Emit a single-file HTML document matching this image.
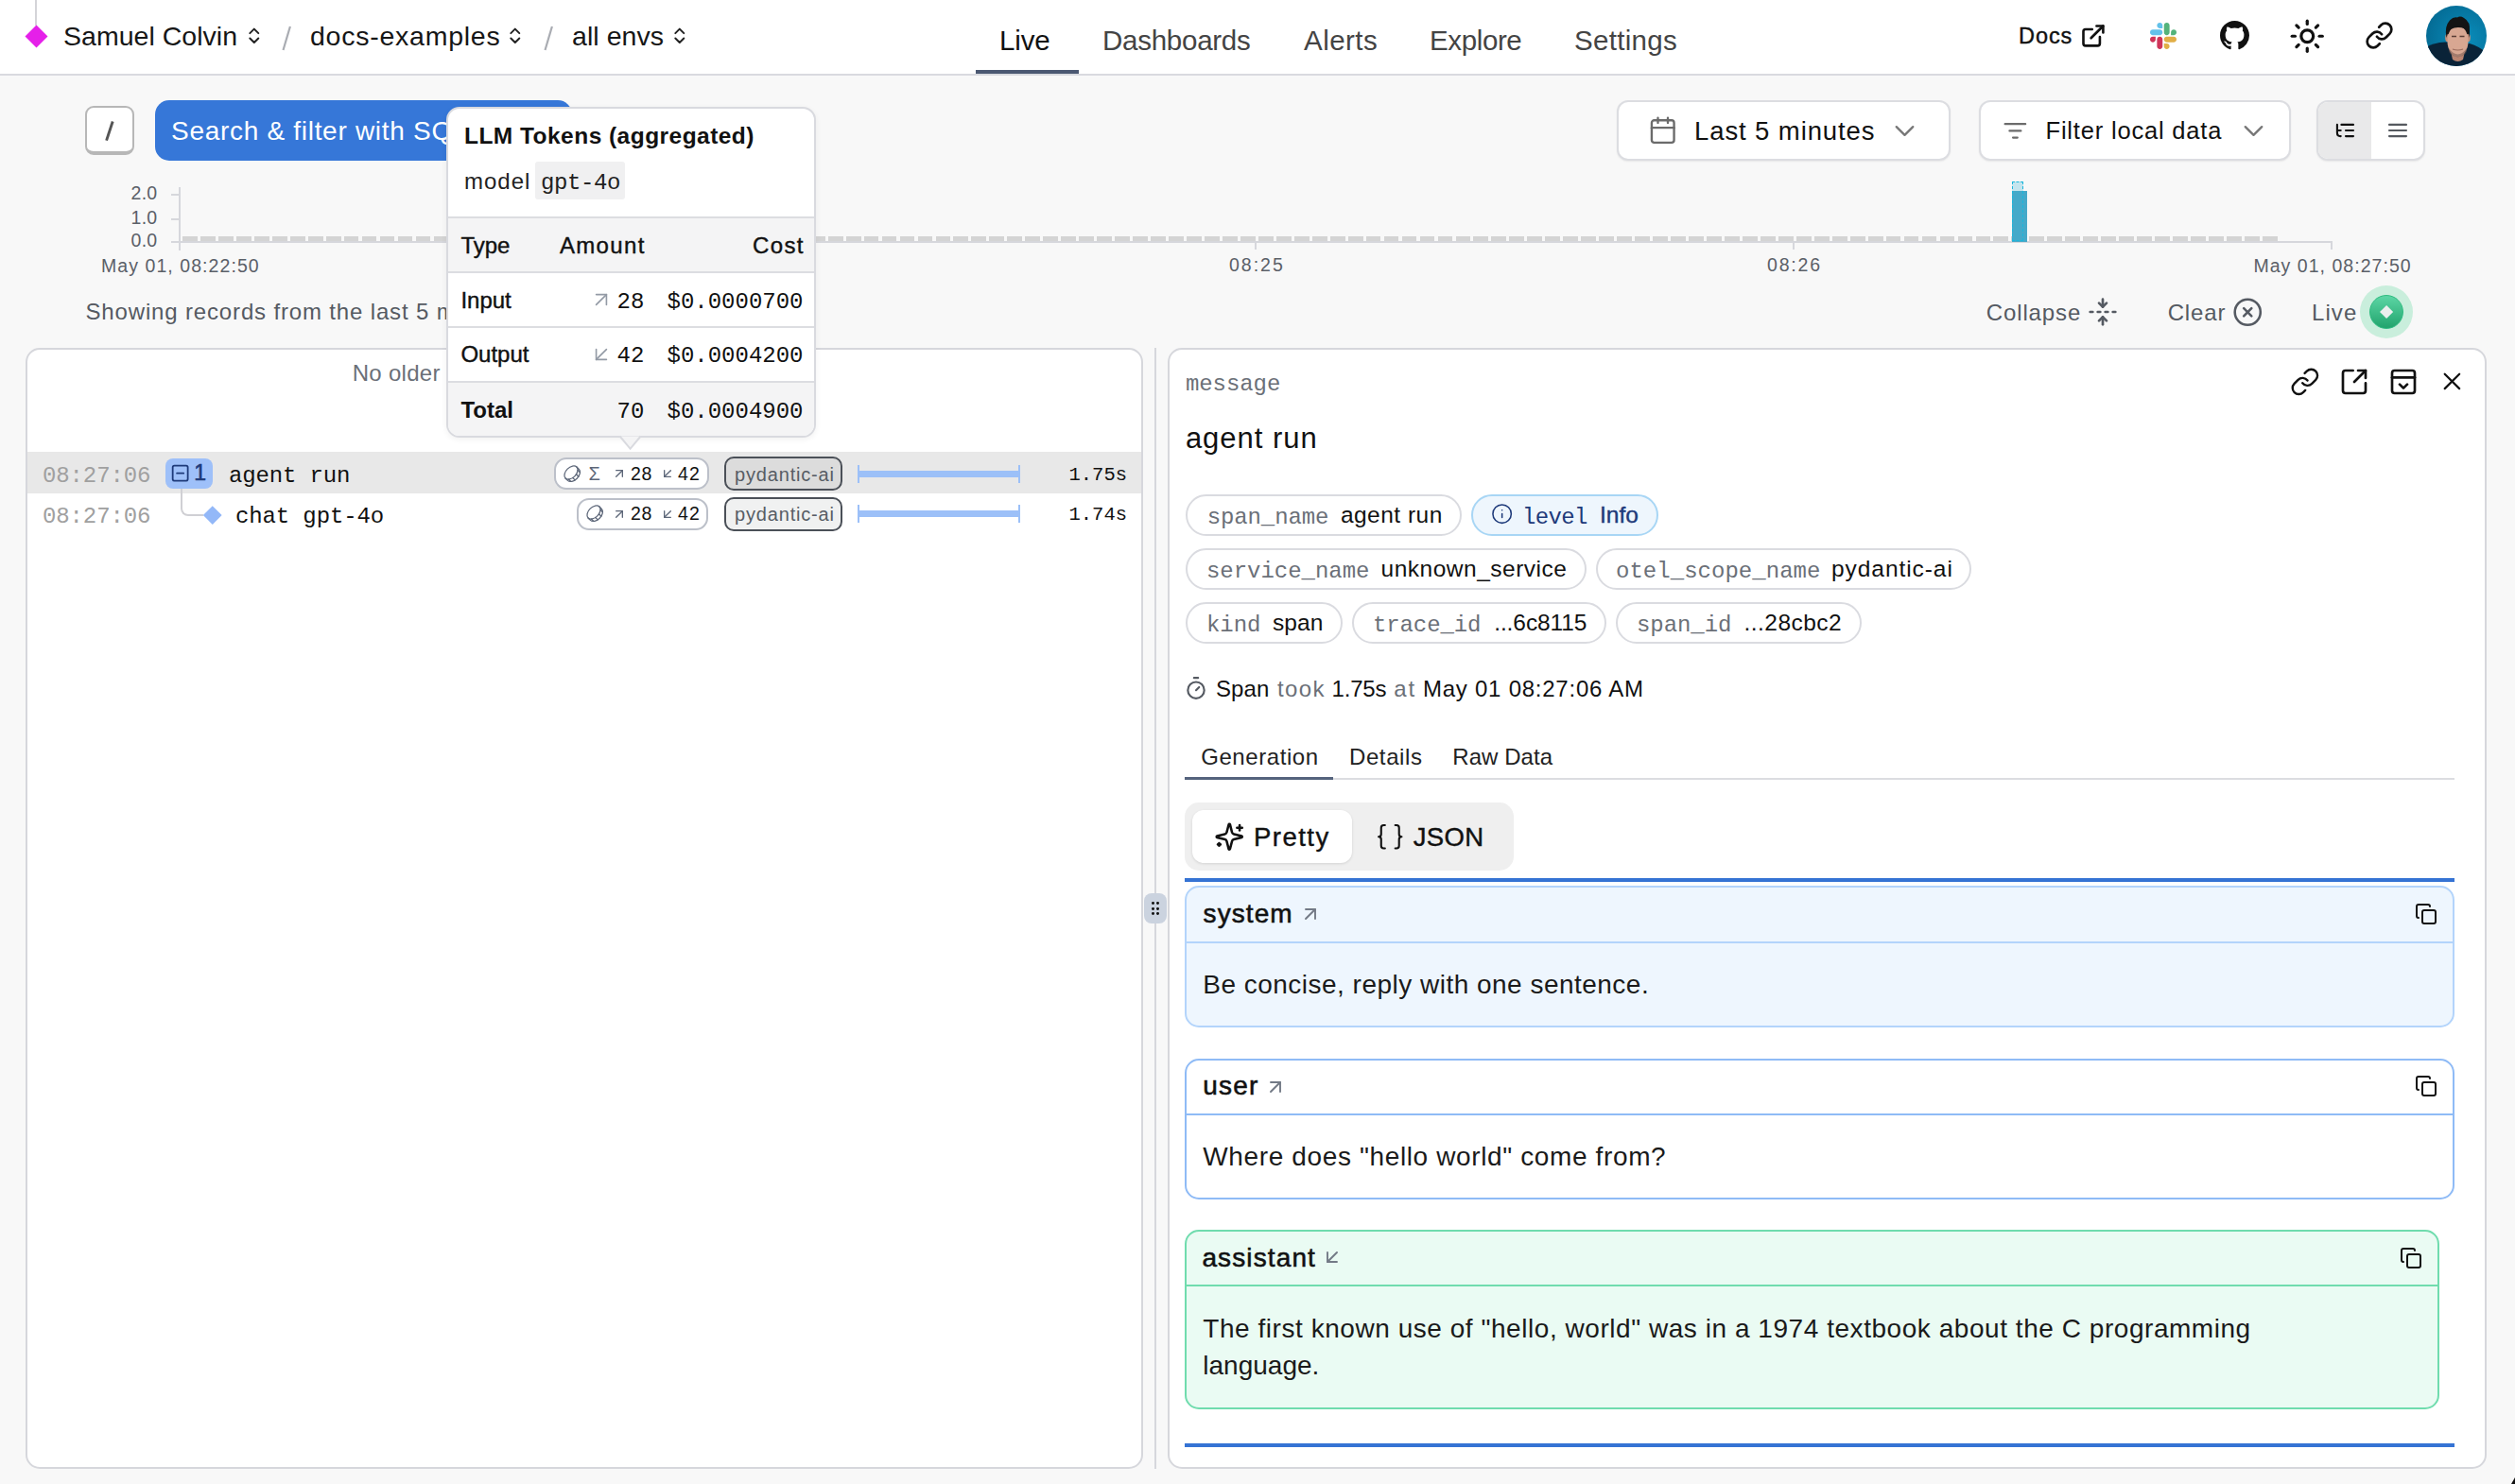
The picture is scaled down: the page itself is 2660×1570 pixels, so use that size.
<!DOCTYPE html><html><head><meta charset="utf-8"><style>html,body{margin:0;padding:0;width:2660px;height:1570px;overflow:hidden;background:#f8f8f8;position:relative}</style></head><body>
<div style="position:absolute;left:0px;top:0px;width:2660px;height:78px;background:#fff"></div>
<div style="position:absolute;left:0px;top:78px;width:2660px;height:2px;background:#d9dadf"></div>
<div style="position:absolute;left:37px;top:0px;width:2px;height:27px;background:#d4d4d8"></div>
<div style="position:absolute;left:29.5px;top:29.5px;width:17px;height:17px;background:#e520e9;transform:rotate(45deg)"></div>
<div id="t0" style="position:absolute;left:67px;top:24.07px;font:400 28.5px/1 'Liberation Sans', sans-serif;color:#161616;white-space:nowrap;letter-spacing:0.022px;">Samuel Colvin</div>
<svg style="position:absolute;left:257.7px;top:27.4px" width="21.6" height="21.6" viewBox="0 0 24 24" fill="none" stroke="#222" stroke-width="2.2" stroke-linecap="round" stroke-linejoin="round" ><path d="m7 15 5 5 5-5"/><path d="m7 9 5-5 5 5"/></svg>
<svg style="position:absolute;left:290px;top:20px" width="30" height="40"><path d="M16.9 8 L9.5 33" stroke="#a9acb2" stroke-width="2.2"/></svg>
<div id="t1" style="position:absolute;left:328px;top:24.07px;font:400 28.5px/1 'Liberation Sans', sans-serif;color:#161616;white-space:nowrap;letter-spacing:0.753px;">docs-examples</div>
<svg style="position:absolute;left:533.7px;top:27.4px" width="21.6" height="21.6" viewBox="0 0 24 24" fill="none" stroke="#222" stroke-width="2.2" stroke-linecap="round" stroke-linejoin="round" ><path d="m7 15 5 5 5-5"/><path d="m7 9 5-5 5 5"/></svg>
<svg style="position:absolute;left:566.5px;top:20px" width="30" height="40"><path d="M16.9 8 L9.5 33" stroke="#a9acb2" stroke-width="2.2"/></svg>
<div id="t2" style="position:absolute;left:605px;top:24.07px;font:400 28.5px/1 'Liberation Sans', sans-serif;color:#161616;white-space:nowrap;letter-spacing:0.067px;">all envs</div>
<svg style="position:absolute;left:707.7px;top:27.4px" width="21.6" height="21.6" viewBox="0 0 24 24" fill="none" stroke="#222" stroke-width="2.2" stroke-linecap="round" stroke-linejoin="round" ><path d="m7 15 5 5 5-5"/><path d="m7 9 5-5 5 5"/></svg>
<div id="t3" style="position:absolute;left:1057px;top:27.93px;font:400 29.5px/1 'Liberation Sans', sans-serif;color:#111;white-space:nowrap;letter-spacing:-0.118px;">Live</div>
<div id="t4" style="position:absolute;left:1166px;top:27.93px;font:400 29.5px/1 'Liberation Sans', sans-serif;color:#444;white-space:nowrap;letter-spacing:-0.256px;">Dashboards</div>
<div id="t5" style="position:absolute;left:1379px;top:27.93px;font:400 29.5px/1 'Liberation Sans', sans-serif;color:#444;white-space:nowrap;letter-spacing:0.470px;">Alerts</div>
<div id="t6" style="position:absolute;left:1512px;top:27.93px;font:400 29.5px/1 'Liberation Sans', sans-serif;color:#444;white-space:nowrap;letter-spacing:-0.377px;">Explore</div>
<div id="t7" style="position:absolute;left:1665px;top:27.93px;font:400 29.5px/1 'Liberation Sans', sans-serif;color:#444;white-space:nowrap;letter-spacing:0.311px;">Settings</div>
<div style="position:absolute;left:1032px;top:74px;width:109px;height:4px;background:#4b5872"></div>
<div id="t8" style="position:absolute;left:2135px;top:26.73px;font:400 23.5px/1 'Liberation Sans', sans-serif;color:#111;white-space:nowrap;letter-spacing:0.921px;-webkit-text-stroke:0.4px currentColor">Docs</div>
<svg style="position:absolute;left:2200.1px;top:24.1px" width="27.9" height="27.9" viewBox="0 0 24 24" fill="none" stroke="#111" stroke-width="2.25" stroke-linecap="round" stroke-linejoin="round" ><path d="M15 3h6v6"/><path d="M10 14 21 3"/><path d="M18 13v6a2 2 0 0 1-2 2H5a2 2 0 0 1-2-2V8a2 2 0 0 1 2-2h6"/></svg>
<svg style="position:absolute;left:2274px;top:24px" width="28" height="28" viewBox="0 0 122.8 122.8"><path d="M25.8 77.6c0 7.1-5.8 12.9-12.9 12.9S0 84.7 0 77.6s5.8-12.9 12.9-12.9h12.9v12.9zm6.5 0c0-7.1 5.8-12.9 12.9-12.9s12.9 5.8 12.9 12.9v32.3c0 7.1-5.8 12.9-12.9 12.9s-12.9-5.8-12.9-12.9V77.6z" fill="#cf3559"/><path d="M45.2 25.8c-7.1 0-12.9-5.8-12.9-12.9S38.1 0 45.2 0s12.9 5.8 12.9 12.9v12.9H45.2zm0 6.5c7.1 0 12.9 5.8 12.9 12.9s-5.8 12.9-12.9 12.9H12.9C5.8 58.1 0 52.3 0 45.2s5.8-12.9 12.9-12.9h32.3z" fill="#62c1ea"/><path d="M97 45.2c0-7.1 5.8-12.9 12.9-12.9s12.9 5.8 12.9 12.9-5.8 12.9-12.9 12.9H97V45.2zm-6.5 0c0 7.1-5.8 12.9-12.9 12.9s-12.9-5.8-12.9-12.9V12.9C64.7 5.8 70.5 0 77.6 0s12.9 5.8 12.9 12.9v32.3z" fill="#53b37b"/><path d="M77.6 97c7.1 0 12.9 5.8 12.9 12.9s-5.8 12.9-12.9 12.9-12.9-5.8-12.9-12.9V97h12.9zm0-6.5c-7.1 0-12.9-5.8-12.9-12.9s5.8-12.9 12.9-12.9h32.3c7.1 0 12.9 5.8 12.9 12.9s-5.8 12.9-12.9 12.9H77.6z" fill="#e1ae46"/></svg>
<svg style="position:absolute;left:2348px;top:22px" width="31" height="31" viewBox="0 0 16 16"><path fill="#111" d="M8 0C3.58 0 0 3.58 0 8c0 3.54 2.29 6.53 5.47 7.59.4.07.55-.17.55-.38 0-.19-.01-.82-.01-1.49-2.01.37-2.53-.49-2.69-.94-.09-.23-.48-.94-.82-1.13-.28-.15-.68-.52-.01-.53.63-.01 1.08.58 1.23.82.72 1.21 1.870.87 2.33.66.07-.52.28-.87.51-1.07-1.78-.2-3.64-.89-3.640-3.95 0-.87.31-1.59.82-2.15-.08-.2-.36-1.02.08-2.12 0 0 .67-.21 2.2.82.64-.18 1.32-.27 2-.27.68 0 1.36.09 2 .27 1.53-1.04 2.2-.82 2.2-.82.44 1.1.16 1.92.08 2.12.51.56.82 1.27.82 2.15 0 3.07-1.87 3.75-3.65 3.95.29.25.54.73.54 1.48 0 1.07-.01 1.93-.01 2.2 0 .21.15.46.55.38A8.013 8.013 0 0016 8c0-4.42-3.58-8-8-8z"/></svg>
<svg style="position:absolute;left:2420.6px;top:18.6px" width="38.5" height="38.5" viewBox="0 0 24 24" fill="none" stroke="#111" stroke-width="2" stroke-linecap="round" stroke-linejoin="round" ><circle cx="12" cy="12" r="4"/><path d="M12 2v2"/><path d="M12 20v2"/><path d="m4.93 4.93 1.41 1.41"/><path d="m17.66 17.66 1.41 1.41"/><path d="M2 12h2"/><path d="M20 12h2"/><path d="m6.34 17.66-1.41 1.41"/><path d="m19.07 4.93-1.41 1.41"/></svg>
<svg style="position:absolute;left:2500.7px;top:22.35px" width="31" height="31" viewBox="0 0 24 24" fill="none" stroke="#111" stroke-width="2.1" stroke-linecap="round" stroke-linejoin="round" ><path d="M10 13a5 5 0 0 0 7.54.54l3-3a5 5 0 0 0-7.07-7.07l-1.72 1.71"/><path d="M14 11a5 5 0 0 0-7.54-.54l-3 3a5 5 0 0 0 7.07 7.07l1.71-1.71"/></svg>
<svg style="position:absolute;left:2566px;top:6px" width="64" height="64" viewBox="0 0 64 64"><defs><clipPath id="avc"><circle cx="32" cy="32" r="32"/></clipPath><radialGradient id="avg" cx="0.65" cy="0.55" r="0.7"><stop offset="0" stop-color="#0a8dbb"/><stop offset="1" stop-color="#046a93"/></radialGradient></defs><g clip-path="url(#avc)"><rect width="64" height="64" fill="url(#avg)"/><path d="M0 44 Q8 39 20 38.5 L46 40 Q56 43 64 50 L64 64 L0 64Z" fill="#0a2338"/><path d="M26 48 L41 48 L39 57 Q33.5 61 28 57Z" fill="#b98471"/><ellipse cx="33.5" cy="29" rx="12.3" ry="15" fill="#141414"/><ellipse cx="22.5" cy="34" rx="2.3" ry="4.2" fill="#c4907c"/><ellipse cx="44.5" cy="34" rx="2.3" ry="4.2" fill="#c4907c"/><ellipse cx="33.5" cy="37.5" rx="11" ry="16.5" fill="#d8a792"/><path d="M24 45 Q33.5 58 43 45 Q44 53 33.5 54.5 Q23 53 24 45Z" fill="#6e5249" opacity="0.5"/><path d="M28 46 Q33.5 48 39 46" stroke="#9a6a5c" stroke-width="1.2" fill="none"/><path d="M27 32.5h5M35.5 32.5h5" stroke="#5a3d35" stroke-width="1.4"/><path d="M21.5 34 Q19 22 25 15.5 Q29 11.5 33 12.5 Q36 10.5 40 13 Q47 17 46 27 L45.5 34 Q44.5 27 41 24.5 Q33 21.5 26 25 Q23 28 21.5 34Z" fill="#141414"/></g></svg>
<div style="position:absolute;left:0px;top:80px;width:2660px;height:1490px;background:#f8f8f8"></div>
<div style="position:absolute;left:90px;top:112px;width:51.5px;height:51.5px;box-sizing:border-box;background:#fff;border:2px solid #b7b7b7;border-bottom-width:4px;border-radius:9px"></div>
<svg style="position:absolute;left:100px;top:120px" width="30" height="36"><path d="M19.2 8.5 L12.6 28.6" stroke="#555" stroke-width="2.9" stroke-linecap="butt"/></svg>
<div style="position:absolute;left:164px;top:106px;width:441px;height:64px;background:#3677d8;border-radius:15px"></div>
<div id="t9" style="position:absolute;left:181px;top:124.50px;font:400 28px/1 'Liberation Sans', sans-serif;color:#fff;white-space:nowrap;letter-spacing:0.705px;">Search &amp; filter with SQL</div>
<div style="position:absolute;left:1709.5px;top:106px;width:353px;height:64px;box-sizing:border-box;background:#fff;border:2px solid #dcdde1;border-radius:12px;box-shadow:0 1px 2px rgba(0,0,0,0.07)"></div>
<svg style="position:absolute;left:1743.2px;top:122.4px" width="31.5" height="31.5" viewBox="0 0 24 24" fill="none" stroke="#6b6b6b" stroke-width="1.8" stroke-linecap="round" stroke-linejoin="round" ><rect width="18" height="18" x="3" y="4" rx="2"/><path d="M16 2v4"/><path d="M8 2v4"/><path d="M3 10h18"/></svg>
<div id="t10" style="position:absolute;left:1792px;top:124.62px;font:400 27.5px/1 'Liberation Sans', sans-serif;color:#111;white-space:nowrap;letter-spacing:0.899px;">Last 5 minutes</div>
<svg style="position:absolute;left:1997px;top:120.7px" width="35" height="35" viewBox="0 0 24 24" fill="none" stroke="#777" stroke-width="1.6" stroke-linecap="round" stroke-linejoin="round" ><path d="m6 9 6 6 6-6"/></svg>
<div style="position:absolute;left:2093px;top:106px;width:330px;height:64px;box-sizing:border-box;background:#fff;border:2px solid #dcdde1;border-radius:12px;box-shadow:0 1px 2px rgba(0,0,0,0.07)"></div>
<svg style="position:absolute;left:2117.35px;top:124.1px" width="28.8" height="28.8" viewBox="0 0 24 24" fill="none" stroke="#6b6b6b" stroke-width="1.8" stroke-linecap="round" stroke-linejoin="round" ><path d="M3 6h18"/><path d="M7 12h10"/><path d="M10 18h4"/></svg>
<div id="t11" style="position:absolute;left:2163.5px;top:126.13px;font:400 25.5px/1 'Liberation Sans', sans-serif;color:#111;white-space:nowrap;letter-spacing:0.813px;">Filter local data</div>
<svg style="position:absolute;left:2365.6px;top:120.7px" width="35" height="35" viewBox="0 0 24 24" fill="none" stroke="#777" stroke-width="1.6" stroke-linecap="round" stroke-linejoin="round" ><path d="m6 9 6 6 6-6"/></svg>
<div style="position:absolute;left:2450px;top:106px;width:114.5px;height:64px;box-sizing:border-box;background:#fff;border:2px solid #dcdde1;border-radius:12px;box-shadow:0 1px 2px rgba(0,0,0,0.07)"></div>
<div style="position:absolute;left:2452px;top:108px;width:55.6px;height:60px;background:#e9e9ea;border-radius:10px 0 0 10px"></div>
<svg style="position:absolute;left:2460px;top:120px" width="40" height="40" viewBox="0 0 40 40" fill="none" stroke="#111" stroke-width="2.1" stroke-linecap="round" stroke-linejoin="round" ><path d="M16.4 11.9H29M21 18H29M21 24.1H29M11.9 11.9V20.5Q11.9 24.1 15.5 24.1H15.7M11.9 18H15.7"/></svg>
<svg style="position:absolute;left:2520px;top:120px" width="40" height="40" viewBox="0 0 40 40" fill="none" stroke="#55595f" stroke-width="2.1" stroke-linecap="round" stroke-linejoin="round" ><path d="M7 11.9H25M7 18H25M7 24.1H25"/></svg>
<div id="t12" style="position:absolute;left:138.6px;top:195.23px;font:400 19.5px/1 'Liberation Sans', sans-serif;color:#5b6068;white-space:nowrap;letter-spacing:0.230px;">2.0</div>
<div id="t13" style="position:absolute;left:138.6px;top:221.12px;font:400 19.5px/1 'Liberation Sans', sans-serif;color:#5b6068;white-space:nowrap;letter-spacing:0.230px;">1.0</div>
<div id="t14" style="position:absolute;left:138.6px;top:245.23px;font:400 19.5px/1 'Liberation Sans', sans-serif;color:#5b6068;white-space:nowrap;letter-spacing:0.230px;">0.0</div>
<div style="position:absolute;left:189px;top:198px;width:2px;height:67px;background:#d6d7dc"></div>
<div style="position:absolute;left:181px;top:205px;width:9px;height:2px;background:#d6d7dc"></div>
<div style="position:absolute;left:181px;top:231px;width:9px;height:2px;background:#d6d7dc"></div>
<div style="position:absolute;left:181px;top:255px;width:9px;height:2px;background:#d6d7dc"></div>
<div style="position:absolute;left:190px;top:255px;width:2277px;height:2px;background:#d6d7dc"></div>
<div style="position:absolute;left:193.4px;top:250.3px;width:2215.8px;height:5px;background:repeating-linear-gradient(90deg,#d4d4d4 0 15.8px,transparent 15.8px 18.965px)"></div>
<div style="position:absolute;left:1326.7px;top:257px;width:2px;height:7px;background:#d6d7dc"></div>
<div style="position:absolute;left:1895.6px;top:257px;width:2px;height:7px;background:#d6d7dc"></div>
<div style="position:absolute;left:2465px;top:257px;width:2px;height:7px;background:#d6d7dc"></div>
<div id="t15" style="position:absolute;left:107px;top:272.23px;font:400 19.5px/1 'Liberation Sans', sans-serif;color:#5b6068;white-space:nowrap;letter-spacing:1.065px;">May 01, 08:22:50</div>
<div id="t16" style="position:absolute;left:1300px;top:271.43px;font:400 19.5px/1 'Liberation Sans', sans-serif;color:#5b6068;white-space:nowrap;letter-spacing:1.989px;">08:25</div>
<div id="t17" style="position:absolute;left:1869px;top:271.43px;font:400 19.5px/1 'Liberation Sans', sans-serif;color:#5b6068;white-space:nowrap;letter-spacing:1.839px;">08:26</div>
<div id="t18" style="position:absolute;left:2383.4px;top:272.23px;font:400 19.5px/1 'Liberation Sans', sans-serif;color:#5b6068;white-space:nowrap;letter-spacing:1.039px;">May 01, 08:27:50</div>
<div style="position:absolute;left:2128px;top:202px;width:16px;height:54px;background:#45a9c9"></div>
<div style="position:absolute;left:2128px;top:192.4px;width:12px;height:10px;background:#c4e5ee"></div>
<div style="position:absolute;left:2128px;top:192.4px;width:12px;height:63px;box-sizing:border-box;border:1.5px dashed #1bb6dc"></div>
<div id="t19" style="position:absolute;left:90.5px;top:317.60px;font:400 24px/1 'Liberation Sans', sans-serif;color:#555a62;white-space:nowrap;letter-spacing:0.845px;">Showing records from the last 5 minutes</div>
<div id="t20" style="position:absolute;left:2100.7px;top:318.60px;font:400 24px/1 'Liberation Sans', sans-serif;color:#555a62;white-space:nowrap;letter-spacing:0.893px;">Collapse</div>
<svg style="position:absolute;left:2208px;top:313.7px" width="32" height="32" viewBox="0 0 24 24" fill="none" stroke="#555a62" stroke-width="2" stroke-linecap="round" stroke-linejoin="round" ><path d="M12 22v-6"/><path d="M12 8V2"/><path d="M4 12H2"/><path d="M10 12H8"/><path d="M16 12h-2"/><path d="M22 12h-2"/><path d="m15 19-3-3-3 3"/><path d="m15 5-3 3-3-3"/></svg>
<div id="t21" style="position:absolute;left:2292.7px;top:318.60px;font:400 24px/1 'Liberation Sans', sans-serif;color:#555a62;white-space:nowrap;letter-spacing:0.845px;">Clear</div>
<svg style="position:absolute;left:2360.75px;top:313.6px" width="32.5" height="32.5" viewBox="0 0 24 24" fill="none" stroke="#555a62" stroke-width="1.9" stroke-linecap="round" stroke-linejoin="round" ><circle cx="12" cy="12" r="10"/><path d="m15 9-6 6"/><path d="m9 9 6 6"/></svg>
<div id="t22" style="position:absolute;left:2445px;top:318.60px;font:400 24px/1 'Liberation Sans', sans-serif;color:#555a62;white-space:nowrap;letter-spacing:1.070px;">Live</div>
<div style="position:absolute;left:2496px;top:302px;width:56px;height:56px;background:#c9eedc;border-radius:50%"></div>
<div style="position:absolute;left:2506px;top:312px;width:36px;height:36px;box-sizing:border-box;background:linear-gradient(180deg,#5cd6a5,#22a46d);border:1.5px solid #2dbb80;border-radius:50%"></div>
<div style="position:absolute;left:2519px;top:324.8px;width:10.2px;height:10.2px;background:#ecefee;transform:rotate(45deg)"></div>
<div style="position:absolute;left:27px;top:368px;width:1182px;height:1186px;box-sizing:border-box;background:#fff;border:2px solid #d6d7dc;border-radius:15px"></div>
<div id="t23" style="position:absolute;left:372.7px;top:382.60px;font:400 24px/1 'Liberation Sans', sans-serif;color:#6b7078;white-space:nowrap;letter-spacing:0.290px;">No older records</div>
<div style="position:absolute;left:29px;top:478px;width:1178px;height:44px;background:#e8e8e8"></div>
<div id="t24" style="position:absolute;left:45px;top:491.76px;font:400 24px/1 'Liberation Mono', monospace;color:#a0a0a0;white-space:nowrap;letter-spacing:-0.111px;">08:27:06</div>
<div style="position:absolute;left:175px;top:485.3px;width:50px;height:31.5px;background:#9ec0f9;border-radius:8px"></div>
<svg style="position:absolute;left:180.3px;top:489.8px" width="21.3" height="21.3" viewBox="0 0 24 24" fill="none" stroke="#1e3a7a" stroke-width="2" stroke-linecap="round" stroke-linejoin="round" ><rect width="18" height="18" x="3" y="3" rx="2"/><path d="M8 12h8"/></svg>
<div id="t25" style="position:absolute;left:205.2px;top:489.45px;font:400 23px/1 'Liberation Sans', sans-serif;color:#1e3a7a;white-space:nowrap;-webkit-text-stroke:0.6px currentColor">1</div>
<div id="t26" style="position:absolute;left:242px;top:491.76px;font:400 24px/1 'Liberation Mono', monospace;color:#111;white-space:nowrap;letter-spacing:-0.148px;">agent run</div>
<div id="t27" style="position:absolute;left:45px;top:534.56px;font:400 24px/1 'Liberation Mono', monospace;color:#a0a0a0;white-space:nowrap;letter-spacing:-0.111px;">08:27:06</div>
<div style="position:absolute;left:191px;top:517px;width:24px;height:29px;box-sizing:border-box;border-left:2px solid #d0d0d4;border-bottom:2px solid #d0d0d4;border-bottom-left-radius:8px"></div>
<div style="position:absolute;left:217.5px;top:538px;width:13.5px;height:13.5px;background:#93b8f8;transform:rotate(45deg)"></div>
<div id="t28" style="position:absolute;left:249px;top:534.56px;font:400 24px/1 'Liberation Mono', monospace;color:#111;white-space:nowrap;letter-spacing:-0.130px;">chat gpt-4o</div>
<div style="position:absolute;left:586px;top:484px;width:163.60000000000002px;height:34px;box-sizing:border-box;background:#fff;border:2px solid #bcc0c9;border-radius:13px"></div>
<svg style="position:absolute;left:595px;top:490.5px" width="20" height="20" viewBox="0 0 20 20" fill="none" stroke="#5c6678" stroke-width="1.25" stroke-linecap="round" stroke-linejoin="round" ><ellipse cx="9" cy="9" rx="8.4" ry="5.4" transform="rotate(-45 9 9)"/><path d="M3.06 14.94L5.46 17.34A8.4 5.4 -45 0 0 17.34 5.46L14.94 3.06"/><path d="M16.05 6.44l2.40 2.40 M14.47 10.80l2.40 2.40 M10.80 14.47l2.40 2.40 M6.44 16.05l2.40 2.40"/></svg>
<div id="t29" style="position:absolute;left:622.5px;top:491.20px;font:400 20px/1 'Liberation Sans', sans-serif;color:#5c6678;white-space:nowrap;">Σ</div>
<svg style="position:absolute;left:646.8px;top:493px" width="16" height="16" viewBox="0 0 24 24" fill="none" stroke="#5c6678" stroke-width="2" stroke-linecap="round" stroke-linejoin="round" ><path d="M7 7h10v10"/><path d="M7 17 17 7"/></svg>
<div id="t30" style="position:absolute;left:667px;top:491.62px;font:400 19.5px/1 'Liberation Sans', sans-serif;color:#111;white-space:nowrap;letter-spacing:0.767px;">28</div>
<svg style="position:absolute;left:697.9px;top:493px" width="16" height="16" viewBox="0 0 24 24" fill="none" stroke="#5c6678" stroke-width="2" stroke-linecap="round" stroke-linejoin="round" ><path d="M17 7 7 17"/><path d="M17 17H7V7"/></svg>
<div id="t31" style="position:absolute;left:717px;top:491.62px;font:400 19.5px/1 'Liberation Sans', sans-serif;color:#111;white-space:nowrap;letter-spacing:1.267px;">42</div>
<div style="position:absolute;left:766px;top:483px;width:125px;height:36px;box-sizing:border-box;background:#dcdcdc;border:2.2px solid #4b5058;border-radius:10px"></div>
<div id="t32" style="position:absolute;left:777px;top:491.50px;font:400 20px/1 'Liberation Sans', sans-serif;color:#575d65;white-space:nowrap;letter-spacing:0.828px;">pydantic-ai</div>
<div style="position:absolute;left:907px;top:497.5px;width:172px;height:7px;background:#9cc0f8"></div>
<div style="position:absolute;left:907px;top:491.6px;width:2px;height:19px;background:#9cc0f8"></div>
<div style="position:absolute;left:1077px;top:491.6px;width:2px;height:19px;background:#9cc0f8"></div>
<div id="t33" style="position:absolute;left:1130.5px;top:492.92px;font:400 20.5px/1 'Liberation Mono', monospace;color:#111;white-space:nowrap;">1.75s</div>
<div style="position:absolute;left:609.8px;top:526.5px;width:139.20000000000005px;height:34.5px;box-sizing:border-box;background:#fff;border:2px solid #bcc0c9;border-radius:13px"></div>
<svg style="position:absolute;left:618.5px;top:533px" width="20" height="20" viewBox="0 0 20 20" fill="none" stroke="#5c6678" stroke-width="1.25" stroke-linecap="round" stroke-linejoin="round" ><ellipse cx="9" cy="9" rx="8.4" ry="5.4" transform="rotate(-45 9 9)"/><path d="M3.06 14.94L5.46 17.34A8.4 5.4 -45 0 0 17.34 5.46L14.94 3.06"/><path d="M16.05 6.44l2.40 2.40 M14.47 10.80l2.40 2.40 M10.80 14.47l2.40 2.40 M6.44 16.05l2.40 2.40"/></svg>
<svg style="position:absolute;left:646.8px;top:535.5px" width="16" height="16" viewBox="0 0 24 24" fill="none" stroke="#5c6678" stroke-width="2" stroke-linecap="round" stroke-linejoin="round" ><path d="M7 7h10v10"/><path d="M7 17 17 7"/></svg>
<div id="t34" style="position:absolute;left:667px;top:534.12px;font:400 19.5px/1 'Liberation Sans', sans-serif;color:#111;white-space:nowrap;letter-spacing:0.767px;">28</div>
<svg style="position:absolute;left:697.9px;top:535.5px" width="16" height="16" viewBox="0 0 24 24" fill="none" stroke="#5c6678" stroke-width="2" stroke-linecap="round" stroke-linejoin="round" ><path d="M17 7 7 17"/><path d="M17 17H7V7"/></svg>
<div id="t35" style="position:absolute;left:717px;top:534.12px;font:400 19.5px/1 'Liberation Sans', sans-serif;color:#111;white-space:nowrap;letter-spacing:1.267px;">42</div>
<div style="position:absolute;left:766px;top:526px;width:125px;height:36px;box-sizing:border-box;background:#f0f1f1;border:2.2px solid #4b5058;border-radius:10px"></div>
<div id="t36" style="position:absolute;left:777px;top:534.00px;font:400 20px/1 'Liberation Sans', sans-serif;color:#575d65;white-space:nowrap;letter-spacing:0.828px;">pydantic-ai</div>
<div style="position:absolute;left:907px;top:540px;width:172px;height:7px;background:#9cc0f8"></div>
<div style="position:absolute;left:907px;top:534px;width:2px;height:19px;background:#9cc0f8"></div>
<div style="position:absolute;left:1077px;top:534px;width:2px;height:19px;background:#9cc0f8"></div>
<div id="t37" style="position:absolute;left:1130.5px;top:535.42px;font:400 20.5px/1 'Liberation Mono', monospace;color:#111;white-space:nowrap;">1.74s</div>
<div style="position:absolute;left:1221px;top:368px;width:2px;height:1186px;background:#d6d7dc"></div>
<div style="position:absolute;left:1210px;top:945px;width:24px;height:32px;background:#cbd3df;border-radius:8px"></div>
<div style="position:absolute;left:1217.85px;top:954.15px;width:2.9px;height:2.9px;border-radius:50%;background:#111"></div>
<div style="position:absolute;left:1217.85px;top:959.65px;width:2.9px;height:2.9px;border-radius:50%;background:#111"></div>
<div style="position:absolute;left:1217.85px;top:965.25px;width:2.9px;height:2.9px;border-radius:50%;background:#111"></div>
<div style="position:absolute;left:1223.35px;top:954.15px;width:2.9px;height:2.9px;border-radius:50%;background:#111"></div>
<div style="position:absolute;left:1223.35px;top:959.65px;width:2.9px;height:2.9px;border-radius:50%;background:#111"></div>
<div style="position:absolute;left:1223.35px;top:965.25px;width:2.9px;height:2.9px;border-radius:50%;background:#111"></div>
<div style="position:absolute;left:1235px;top:368px;width:1395px;height:1186px;box-sizing:border-box;background:#fff;border:2px solid #d6d7dc;border-radius:15px"></div>
<div id="t38" style="position:absolute;left:1253.9px;top:395.06px;font:400 24px/1 'Liberation Mono', monospace;color:#6b7078;white-space:nowrap;letter-spacing:-0.065px;">message</div>
<svg style="position:absolute;left:2422.1px;top:387.9px" width="31.8" height="31.8" viewBox="0 0 24 24" fill="none" stroke="#111" stroke-width="1.8" stroke-linecap="round" stroke-linejoin="round" ><path d="M10 13a5 5 0 0 0 7.54.54l3-3a5 5 0 0 0-7.07-7.07l-1.72 1.71"/><path d="M14 11a5 5 0 0 0-7.54-.54l-3 3a5 5 0 0 0 7.07 7.07l1.71-1.71"/></svg>
<svg style="position:absolute;left:2474px;top:388px" width="32" height="32" viewBox="0 0 24 24" fill="none" stroke="#111" stroke-width="2" stroke-linecap="round" stroke-linejoin="round" ><path d="M21 13v6a2 2 0 0 1-2 2H5a2 2 0 0 1-2-2V5a2 2 0 0 1 2-2h6"/><path d="m21 3-9 9"/><path d="M15 3h6v6"/></svg>
<svg style="position:absolute;left:2525.9px;top:387.8px" width="32" height="32" viewBox="0 0 24 24" fill="none" stroke="#111" stroke-width="2" stroke-linecap="round" stroke-linejoin="round" ><rect width="18" height="18" x="3" y="3" rx="2"/><path d="M3 8.5h18"/><path d="m9 14 3 3 3-3"/></svg>
<svg style="position:absolute;left:2578.4px;top:388.35px" width="30.9" height="30.9" viewBox="0 0 24 24" fill="none" stroke="#111" stroke-width="1.75" stroke-linecap="round" stroke-linejoin="round" ><path d="M18 6 6 18"/><path d="m6 6 12 12"/></svg>
<div id="t39" style="position:absolute;left:1253.9px;top:447.95px;font:400 31px/1 'Liberation Sans', sans-serif;color:#111;white-space:nowrap;letter-spacing:0.983px;">agent run</div>
<div style="position:absolute;left:1253.5px;top:523px;width:292.5px;height:43.799999999999955px;box-sizing:border-box;background:#fff;border:2px solid #dadbe0;border-radius:22px"></div>
<div id="t40" style="position:absolute;left:1276.7px;top:535.66px;font:400 24px/1 'Liberation Mono', monospace;color:#6b7078;white-space:nowrap;letter-spacing:-0.111px;">span_name</div>
<div id="t41" style="position:absolute;left:1417.9px;top:533.07px;font:400 24.5px/1 'Liberation Sans', sans-serif;color:#111;white-space:nowrap;letter-spacing:0.480px;">agent run</div>
<div style="position:absolute;left:1555.5px;top:523px;width:198.5px;height:43.799999999999955px;box-sizing:border-box;background:#eef6fd;border:2px solid #a8d6f5;border-radius:22px"></div>
<svg style="position:absolute;left:1577.2px;top:532px" width="23.3" height="23.3" viewBox="0 0 24 24" fill="none" stroke="#1e3a7a" stroke-width="1.6" stroke-linecap="round" stroke-linejoin="round" ><circle cx="12" cy="12" r="10"/><path d="M12 16v-4"/><path d="M12 8h.01"/></svg>
<div id="t42" style="position:absolute;left:1610px;top:535.66px;font:400 24px/1 'Liberation Mono', monospace;color:#1e3a7a;white-space:nowrap;letter-spacing:-0.644px;">level</div>
<div id="t43" style="position:absolute;left:1692px;top:533.07px;font:400 24.5px/1 'Liberation Sans', sans-serif;color:#1e3a7a;white-space:nowrap;-webkit-text-stroke:0.4px currentColor">Info</div>
<div style="position:absolute;left:1253.7px;top:580.1px;width:424.0px;height:43.799999999999955px;box-sizing:border-box;background:#fff;border:2px solid #dadbe0;border-radius:22px"></div>
<div id="t44" style="position:absolute;left:1276px;top:592.96px;font:400 24px/1 'Liberation Mono', monospace;color:#6b7078;white-space:nowrap;letter-spacing:-0.035px;">service_name</div>
<div id="t45" style="position:absolute;left:1460.6px;top:590.38px;font:400 24.5px/1 'Liberation Sans', sans-serif;color:#111;white-space:nowrap;letter-spacing:0.504px;">unknown_service</div>
<div style="position:absolute;left:1688px;top:580.1px;width:397.3000000000002px;height:43.799999999999955px;box-sizing:border-box;background:#fff;border:2px solid #dadbe0;border-radius:22px"></div>
<div id="t46" style="position:absolute;left:1709px;top:592.96px;font:400 24px/1 'Liberation Mono', monospace;color:#6b7078;white-space:nowrap;letter-spacing:0.028px;">otel_scope_name</div>
<div id="t47" style="position:absolute;left:1937px;top:590.38px;font:400 24.5px/1 'Liberation Sans', sans-serif;color:#111;white-space:nowrap;letter-spacing:0.939px;">pydantic-ai</div>
<div style="position:absolute;left:1253.7px;top:637.1px;width:166.5px;height:43.799999999999955px;box-sizing:border-box;background:#fff;border:2px solid #dadbe0;border-radius:22px"></div>
<div id="t48" style="position:absolute;left:1276px;top:649.96px;font:400 24px/1 'Liberation Mono', monospace;color:#6b7078;white-space:nowrap;letter-spacing:-0.056px;">kind</div>
<div id="t49" style="position:absolute;left:1346px;top:647.38px;font:400 24.5px/1 'Liberation Sans', sans-serif;color:#111;white-space:nowrap;letter-spacing:0.110px;">span</div>
<div style="position:absolute;left:1429.8px;top:637.1px;width:269.4000000000001px;height:43.799999999999955px;box-sizing:border-box;background:#fff;border:2px solid #dadbe0;border-radius:22px"></div>
<div id="t50" style="position:absolute;left:1452px;top:649.96px;font:400 24px/1 'Liberation Mono', monospace;color:#6b7078;white-space:nowrap;letter-spacing:-0.111px;">trace_id</div>
<div id="t51" style="position:absolute;left:1580.2px;top:647.38px;font:400 24.5px/1 'Liberation Sans', sans-serif;color:#111;white-space:nowrap;letter-spacing:-0.089px;">...6c8115</div>
<div style="position:absolute;left:1708.5px;top:637.1px;width:260.9000000000001px;height:43.799999999999955px;box-sizing:border-box;background:#fff;border:2px solid #dadbe0;border-radius:22px"></div>
<div id="t52" style="position:absolute;left:1731px;top:649.96px;font:400 24px/1 'Liberation Mono', monospace;color:#6b7078;white-space:nowrap;letter-spacing:-0.065px;">span_id</div>
<div id="t53" style="position:absolute;left:1844.6px;top:647.38px;font:400 24.5px/1 'Liberation Sans', sans-serif;color:#111;white-space:nowrap;letter-spacing:0.442px;">...28cbc2</div>
<svg style="position:absolute;left:1252px;top:715px" width="26" height="26" viewBox="0 0 24 24" fill="none" stroke="#555a62" stroke-width="2" stroke-linecap="round" stroke-linejoin="round" ><path d="M10 2h4"/><path d="m12 14 3-3"/><circle cx="12" cy="14" r="8"/></svg>
<div id="t54" style="position:absolute;left:1286px;top:717.40px;font:400 24px/1 'Liberation Sans', sans-serif;color:#111;white-space:nowrap;letter-spacing:0.092px;">Span</div>
<div id="t55" style="position:absolute;left:1351px;top:717.40px;font:400 24px/1 'Liberation Sans', sans-serif;color:#6b7078;white-space:nowrap;letter-spacing:1.355px;">took</div>
<div id="t56" style="position:absolute;left:1408.6px;top:717.40px;font:400 24px/1 'Liberation Sans', sans-serif;color:#111;white-space:nowrap;letter-spacing:-0.220px;">1.75s</div>
<div id="t57" style="position:absolute;left:1474.2px;top:717.40px;font:400 24px/1 'Liberation Sans', sans-serif;color:#6b7078;white-space:nowrap;letter-spacing:2.024px;">at</div>
<div id="t58" style="position:absolute;left:1505px;top:717.40px;font:400 24px/1 'Liberation Sans', sans-serif;color:#111;white-space:nowrap;letter-spacing:0.753px;">May 01 08:27:06 AM</div>
<div id="t59" style="position:absolute;left:1270.2px;top:788.60px;font:400 24px/1 'Liberation Sans', sans-serif;color:#222;white-space:nowrap;letter-spacing:0.577px;">Generation</div>
<div id="t60" style="position:absolute;left:1427px;top:788.60px;font:400 24px/1 'Liberation Sans', sans-serif;color:#222;white-space:nowrap;letter-spacing:0.597px;">Details</div>
<div id="t61" style="position:absolute;left:1536.3px;top:788.60px;font:400 24px/1 'Liberation Sans', sans-serif;color:#222;white-space:nowrap;letter-spacing:0.052px;">Raw Data</div>
<div style="position:absolute;left:1252.8px;top:823px;width:1343px;height:2px;background:#dcdde1"></div>
<div style="position:absolute;left:1252.8px;top:821.8px;width:157.2px;height:3px;background:#55637d"></div>
<div style="position:absolute;left:1252.8px;top:849.2px;width:348px;height:72px;background:#efefef;border-radius:15px"></div>
<div style="position:absolute;left:1261px;top:857.4px;width:169px;height:55.3px;background:#fff;border-radius:12px;box-shadow:0 1px 3px rgba(0,0,0,0.12)"></div>
<svg style="position:absolute;left:1284.3px;top:868.6px" width="32.5" height="32.5" viewBox="0 0 24 24" fill="none" stroke="#111" stroke-width="1.9" stroke-linecap="round" stroke-linejoin="round" ><path d="M9.937 15.5A2 2 0 0 0 8.5 14.063l-6.135-1.582a.5.5 0 0 1 0-.962L8.5 9.936A2 2 0 0 0 9.937 8.5l1.582-6.135a.5.5 0 0 1 .963 0L14.063 8.5A2 2 0 0 0 15.5 9.937l6.135 1.581a.5.5 0 0 1 0 .964L15.5 14.063a2 2 0 0 0-1.437 1.437l-1.582 6.135a.5.5 0 0 1-.963 0z"/><path d="M20 3v4"/><path d="M22 5h-4"/><path d="M4 17v2"/><path d="M5 18H3"/></svg>
<div id="t62" style="position:absolute;left:1326px;top:871.92px;font:400 27.5px/1 'Liberation Sans', sans-serif;color:#111;white-space:nowrap;letter-spacing:1.484px;-webkit-text-stroke:0.4px currentColor">Pretty</div>
<svg style="position:absolute;left:1453.7px;top:868.5px" width="32.5" height="32.5" viewBox="0 0 24 24" fill="none" stroke="#111" stroke-width="1.55" stroke-linecap="round" stroke-linejoin="round" ><path d="M8 3H7a2 2 0 0 0-2 2v5a2 2 0 0 1-2 2 2 2 0 0 1 2 2v5c0 1.1.9 2 2 2h1"/><path d="M16 21h1a2 2 0 0 0 2-2v-5c0-1.1.9-2 2-2a2 2 0 0 1-2-2V5a2 2 0 0 0-2-2h-1"/></svg>
<div id="t63" style="position:absolute;left:1494.8px;top:871.92px;font:400 27.5px/1 'Liberation Sans', sans-serif;color:#111;white-space:nowrap;letter-spacing:0.302px;-webkit-text-stroke:0.4px currentColor">JSON</div>
<div style="position:absolute;left:1252.8px;top:929px;width:1343px;height:4px;background:#3573d4"></div>
<div style="position:absolute;left:1253px;top:937px;width:1343px;height:150px;box-sizing:border-box;background:#eef6fe;border:2px solid #b3d4fb;border-radius:15px"></div>
<div style="position:absolute;left:1255px;top:995.5px;width:1339px;height:2px;background:#b3d4fb"></div>
<div id="t64" style="position:absolute;left:1272.6px;top:953.20px;font:400 28px/1 'Liberation Sans', sans-serif;color:#111;white-space:nowrap;letter-spacing:1.079px;-webkit-text-stroke:0.55px currentColor">system</div>
<svg style="position:absolute;left:1374px;top:955px" width="24" height="24" viewBox="0 0 24 24" fill="none" stroke="#737a86" stroke-width="1.9" stroke-linecap="round" stroke-linejoin="round" ><path d="M7 7h10v10"/><path d="M7 17 17 7"/></svg>
<svg style="position:absolute;left:2554px;top:955px" width="24" height="24" viewBox="0 0 24 24" fill="none" stroke="#111" stroke-width="2" stroke-linecap="round" stroke-linejoin="round" ><rect width="14" height="14" x="8" y="8" rx="2" ry="2"/><path d="M4 16c-1.1 0-2-.9-2-2V4c0-1.1.9-2 2-2h10c1.1 0 2 .9 2 2"/></svg>
<div id="t65" style="position:absolute;left:1272.3px;top:1027.90px;font:400 28px/1 'Liberation Sans', sans-serif;color:#1a1a1a;white-space:nowrap;letter-spacing:0.483px;">Be concise, reply with one sentence.</div>
<div style="position:absolute;left:1253px;top:1119.5px;width:1343px;height:149.5px;box-sizing:border-box;background:#fff;border:2px solid #8fbbf6;border-radius:15px"></div>
<div style="position:absolute;left:1255px;top:1177.5px;width:1339px;height:2px;background:#8fbbf6"></div>
<div id="t66" style="position:absolute;left:1272.3px;top:1135.40px;font:400 28px/1 'Liberation Sans', sans-serif;color:#111;white-space:nowrap;letter-spacing:1.170px;-webkit-text-stroke:0.55px currentColor">user</div>
<svg style="position:absolute;left:1336.9px;top:1137.5px" width="24" height="24" viewBox="0 0 24 24" fill="none" stroke="#737a86" stroke-width="1.9" stroke-linecap="round" stroke-linejoin="round" ><path d="M7 7h10v10"/><path d="M7 17 17 7"/></svg>
<svg style="position:absolute;left:2554px;top:1136.5px" width="24" height="24" viewBox="0 0 24 24" fill="none" stroke="#111" stroke-width="2" stroke-linecap="round" stroke-linejoin="round" ><rect width="14" height="14" x="8" y="8" rx="2" ry="2"/><path d="M4 16c-1.1 0-2-.9-2-2V4c0-1.1.9-2 2-2h10c1.1 0 2 .9 2 2"/></svg>
<div id="t67" style="position:absolute;left:1272.3px;top:1209.60px;font:400 28px/1 'Liberation Sans', sans-serif;color:#1a1a1a;white-space:nowrap;letter-spacing:0.627px;">Where does "hello world" come from?</div>
<div style="position:absolute;left:1253px;top:1301px;width:1327px;height:190px;box-sizing:border-box;background:#eafbf3;border:2px solid #70dcae;border-radius:15px"></div>
<div style="position:absolute;left:1255px;top:1358.5px;width:1323px;height:2px;background:#70dcae"></div>
<div id="t68" style="position:absolute;left:1271.4px;top:1316.80px;font:400 28px/1 'Liberation Sans', sans-serif;color:#111;white-space:nowrap;letter-spacing:1.123px;-webkit-text-stroke:0.55px currentColor">assistant</div>
<svg style="position:absolute;left:1397px;top:1318px" width="24" height="24" viewBox="0 0 24 24" fill="none" stroke="#737a86" stroke-width="1.9" stroke-linecap="round" stroke-linejoin="round" ><path d="M17 7 7 17"/><path d="M17 17H7V7"/></svg>
<svg style="position:absolute;left:2538px;top:1319px" width="24" height="24" viewBox="0 0 24 24" fill="none" stroke="#111" stroke-width="2" stroke-linecap="round" stroke-linejoin="round" ><rect width="14" height="14" x="8" y="8" rx="2" ry="2"/><path d="M4 16c-1.1 0-2-.9-2-2V4c0-1.1.9-2 2-2h10c1.1 0 2 .9 2 2"/></svg>
<div id="t69" style="position:absolute;left:1272.3px;top:1391.70px;font:400 28px/1 'Liberation Sans', sans-serif;color:#1a1a1a;white-space:nowrap;letter-spacing:0.545px;">The first known use of "hello, world" was in a 1974 textbook about the C programming</div>
<div id="t70" style="position:absolute;left:1272.3px;top:1431.20px;font:400 28px/1 'Liberation Sans', sans-serif;color:#1a1a1a;white-space:nowrap;">language.</div>
<div style="position:absolute;left:1252.8px;top:1526.8px;width:1343px;height:4px;background:#3573d4"></div>
<svg style="position:absolute;left:2655px;top:1562px" width="5" height="8"><path d="M5 1 L5 8 L1 8Z" fill="#111"/></svg>
<div style="position:absolute;left:472px;top:113px;width:391px;height:350px;box-sizing:border-box;background:#fff;border:2px solid #d9dadf;border-radius:14px;overflow:hidden;box-shadow:0 2px 6px rgba(0,0,0,0.06)"><div style="position:absolute;left:0;top:113.7px;width:100%;height:55.9px;background:#f4f4f5;border-top:2px solid #dcdde1;border-bottom:2px solid #dcdde1"></div><div style="position:absolute;left:0;top:229.8px;width:100%;height:2px;background:#dcdde1"></div><div style="position:absolute;left:0;top:288px;width:100%;height:70px;background:#f4f4f5;border-top:2px solid #dcdde1"></div></div>
<svg style="position:absolute;left:654px;top:460px" width="26" height="17" viewBox="0 0 26 17"><path d="M1.6 1.5 L12.6 14.8 L23.6 1.5" fill="#f4f4f5" stroke="#d9dadf" stroke-width="2"/></svg>
<div id="t71" style="position:absolute;left:491px;top:131.68px;font:700 24.5px/1 'Liberation Sans', sans-serif;color:#111;white-space:nowrap;letter-spacing:0.462px;">LLM Tokens (aggregated)</div>
<div id="t72" style="position:absolute;left:491px;top:179.50px;font:400 24px/1 'Liberation Sans', sans-serif;color:#222;white-space:nowrap;letter-spacing:1.016px;">model</div>
<div style="position:absolute;left:566px;top:171px;width:95px;height:40px;background:#f0f0f1;border-radius:3px"></div>
<div id="t73" style="position:absolute;left:572px;top:181.66px;font:400 24px/1 'Liberation Mono', monospace;color:#222;white-space:nowrap;letter-spacing:-0.396px;">gpt-4o</div>
<div id="t74" style="position:absolute;left:487.4px;top:247.60px;font:400 24px/1 'Liberation Sans', sans-serif;color:#111;white-space:nowrap;-webkit-text-stroke:0.4px currentColor">Type</div>
<div id="t75" style="position:absolute;left:591.9px;top:247.60px;font:400 24px/1 'Liberation Sans', sans-serif;color:#111;white-space:nowrap;letter-spacing:1.344px;-webkit-text-stroke:0.4px currentColor">Amount</div>
<div id="t76" style="position:absolute;left:796px;top:247.60px;font:400 24px/1 'Liberation Sans', sans-serif;color:#111;white-space:nowrap;letter-spacing:1.360px;-webkit-text-stroke:0.4px currentColor">Cost</div>
<div id="t77" style="position:absolute;left:487.4px;top:305.60px;font:400 24px/1 'Liberation Sans', sans-serif;color:#111;white-space:nowrap;-webkit-text-stroke:0.4px currentColor">Input</div>
<svg style="position:absolute;left:622.6px;top:304px" width="26" height="26" viewBox="0 0 24 24" fill="none" stroke="#939aa5" stroke-width="1.5" stroke-linecap="round" stroke-linejoin="round" ><path d="M7 7h10v10"/><path d="M7 17 17 7"/></svg>
<div id="t78" style="position:absolute;left:652.5px;top:307.76px;font:400 24px/1 'Liberation Mono', monospace;color:#111;white-space:nowrap;letter-spacing:0.128px;">28</div>
<div id="t79" style="position:absolute;left:705.6px;top:307.76px;font:400 24px/1 'Liberation Mono', monospace;color:#111;white-space:nowrap;letter-spacing:-0.021px;">$0.0000700</div>
<div id="t80" style="position:absolute;left:487.4px;top:363.30px;font:400 24px/1 'Liberation Sans', sans-serif;color:#111;white-space:nowrap;-webkit-text-stroke:0.4px currentColor">Output</div>
<svg style="position:absolute;left:622.6px;top:361.9px" width="26" height="26" viewBox="0 0 24 24" fill="none" stroke="#939aa5" stroke-width="1.5" stroke-linecap="round" stroke-linejoin="round" ><path d="M17 7 7 17"/><path d="M17 17H7V7"/></svg>
<div id="t81" style="position:absolute;left:652.5px;top:365.46px;font:400 24px/1 'Liberation Mono', monospace;color:#111;white-space:nowrap;letter-spacing:0.128px;">42</div>
<div id="t82" style="position:absolute;left:705.6px;top:365.46px;font:400 24px/1 'Liberation Mono', monospace;color:#111;white-space:nowrap;letter-spacing:-0.021px;">$0.0004200</div>
<div id="t83" style="position:absolute;left:487.4px;top:421.50px;font:700 24px/1 'Liberation Sans', sans-serif;color:#111;white-space:nowrap;">Total</div>
<div id="t84" style="position:absolute;left:652.5px;top:423.66px;font:400 24px/1 'Liberation Mono', monospace;color:#111;white-space:nowrap;letter-spacing:0.128px;">70</div>
<div id="t85" style="position:absolute;left:705.6px;top:423.66px;font:400 24px/1 'Liberation Mono', monospace;color:#111;white-space:nowrap;letter-spacing:-0.021px;">$0.0004900</div>
</body></html>
